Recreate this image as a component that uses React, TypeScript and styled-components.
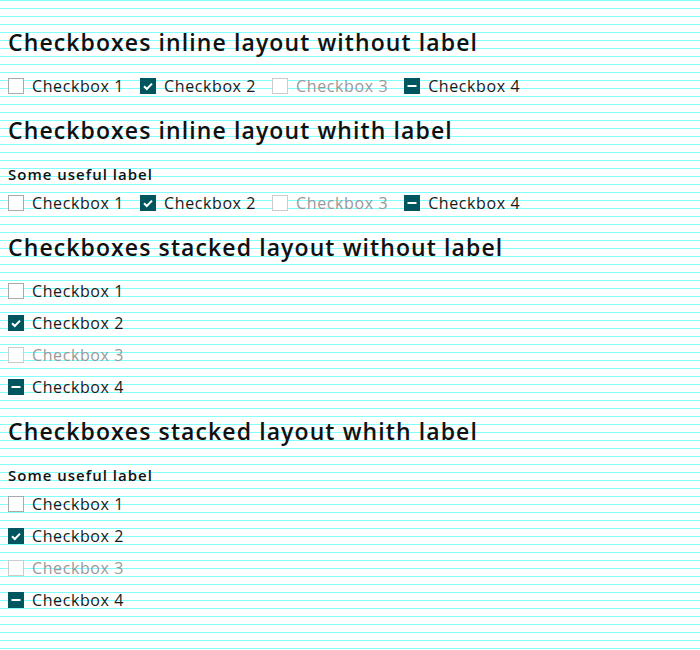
import React from "react";
import styled, { createGlobalStyle, css } from "styled-components";

const GlobalStyle = createGlobalStyle`
  html {
    background-color: #ffffff;
    background-image: linear-gradient(to bottom, rgba(0, 255, 255, 0.5) 1px, transparent 1px);
    background-size: 100% 8px;
    min-height: 100%;
  }
  body {
    margin: 0;
    font-family: "Open Sans", "Liberation Sans", sans-serif;
    color: #1a1a1a;
  }
`;

const Page = styled.div`
  padding: 22px 8px 0;
  display: flex;
  flex-direction: column;
  gap: 8px;
`;

const Section = styled.section`
  display: flex;
  flex-direction: column;
  gap: 8px;
`;

const Heading = styled.h2`
  margin: 0;
  padding: 4px 0;
  font-size: 23px;
  line-height: 32px;
  font-weight: 600;
  letter-spacing: 1.1px;
  color: #111;
`;

const Group = styled.div`
  display: flex;
  flex-direction: column;
`;

const GroupLabel = styled.div`
  margin: 4px 0 1px;
  font-size: 15px;
  line-height: 24px;
  font-weight: 600;
  letter-spacing: 1px;
  color: #111;
`;

const Options = styled.div<{ $inline?: boolean }>`
  display: flex;
  flex-direction: ${(p) => (p.$inline ? "row" : "column")};
  gap: ${(p) => (p.$inline ? "16px" : "0")};
`;

const Item = styled.label<{ $disabled?: boolean }>`
  display: flex;
  align-items: center;
  gap: 8px;
  height: 32px;
  font-size: 16px;
  line-height: 32px;
  font-weight: 400;
  letter-spacing: 0.6px;
  color: ${(p) => (p.$disabled ? "#999" : "#1a1a1a")};
`;

type State = "off" | "on" | "mixed";

const Box = styled.span<{ $state: State; $disabled?: boolean }>`
  box-sizing: border-box;
  width: 16px;
  height: 16px;
  flex: none;
  display: flex;
  align-items: center;
  justify-content: center;
  ${(p) =>
    p.$state === "off"
      ? css`
          background: #fff;
          border: 1px solid ${p.$disabled ? "#ccc" : "#aaa"};
        `
      : css`
          background: #00565f;
        `}
`;

const Checkbox: React.FC<{ label: string; state: State; disabled?: boolean }> = ({
  label,
  state,
  disabled,
}) => (
  <Item $disabled={disabled}>
    <Box $state={state} $disabled={disabled}>
      {state === "on" && (
        <svg width="16" height="16" viewBox="0 0 16 16">
          <path d="M4 8.2 L6.8 11 L12 5.6" fill="none" stroke="#fff" strokeWidth="2" />
        </svg>
      )}
      {state === "mixed" && (
        <svg width="16" height="16" viewBox="0 0 16 16">
          <rect x="3.5" y="7" width="9" height="2" fill="#fff" />
        </svg>
      )}
    </Box>
    {label}
  </Item>
);

const items: { label: string; state: State; disabled?: boolean }[] = [
  { label: "Checkbox 1", state: "off" },
  { label: "Checkbox 2", state: "on" },
  { label: "Checkbox 3", state: "off", disabled: true },
  { label: "Checkbox 4", state: "mixed" },
];

const sections = [
  { title: "Checkboxes inline layout without label", inline: true, label: false },
  { title: "Checkboxes inline layout whith label", inline: true, label: true },
  { title: "Checkboxes stacked layout without label", inline: false, label: false },
  { title: "Checkboxes stacked layout whith label", inline: false, label: true },
];

export default function App() {
  return (
    <>
      <GlobalStyle />
      <Page>
        {sections.map((s) => (
          <Section key={s.title}>
            <Heading>{s.title}</Heading>
            <Group>
              {s.label && <GroupLabel>Some useful label</GroupLabel>}
              <Options $inline={s.inline}>
                {items.map((it) => (
                  <Checkbox key={it.label} {...it} />
                ))}
              </Options>
            </Group>
          </Section>
        ))}
      </Page>
    </>
  );
}
